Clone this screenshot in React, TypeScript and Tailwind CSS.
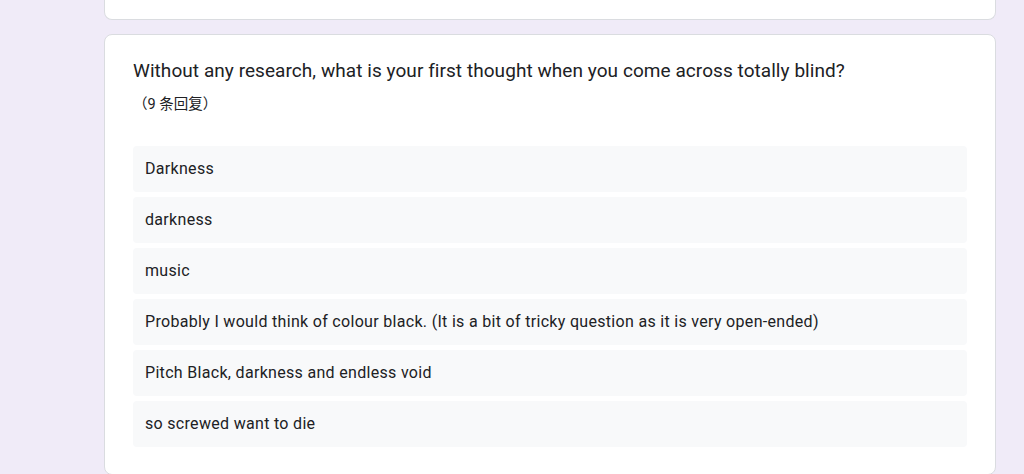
const responses = [
  "Darkness",
  "darkness",
  "music",
  "Probably I would think of colour black. (It is a bit of tricky question as it is very open-ended)",
  "Pitch Black, darkness and endless void",
  "so screwed want to die",
];

export default function App() {
  return (
    <div className="min-h-[474px] h-[474px] overflow-hidden bg-[#f0ebf8] font-['Roboto','Noto_Sans_CJK_SC',sans-serif] text-[#202124]">
      <div className="ml-[104px] w-[892px]">
        {/* previous question card, scrolled mostly out of view */}
        <div className="h-[20px] rounded-b-lg border border-t-0 border-[#dadce0] bg-white" />

        <div className="mt-[14px] rounded-lg border border-[#dadce0] bg-white px-[28px] pt-[23px] pb-[27px]">
          <div className="text-[19px] leading-[26px] tracking-[0.06px] text-[#202124]">
            Without any research, what is your first thought when you come across totally blind?
          </div>
          <div className="mt-[11px] text-[14.5px] leading-[20px] text-[#202124]">（9 条回复）</div>

          <div className="mt-[31px] flex flex-col gap-[5px]">
            {responses.map((r, i) => (
              <div
                key={i}
                className="flex h-[46px] items-center rounded-[4px] bg-[#f8f9fa] px-[12px] text-[16px] tracking-[0.31px] text-[#202124]"
              >
                {r}
              </div>
            ))}
          </div>
        </div>
      </div>
    </div>
  );
}
